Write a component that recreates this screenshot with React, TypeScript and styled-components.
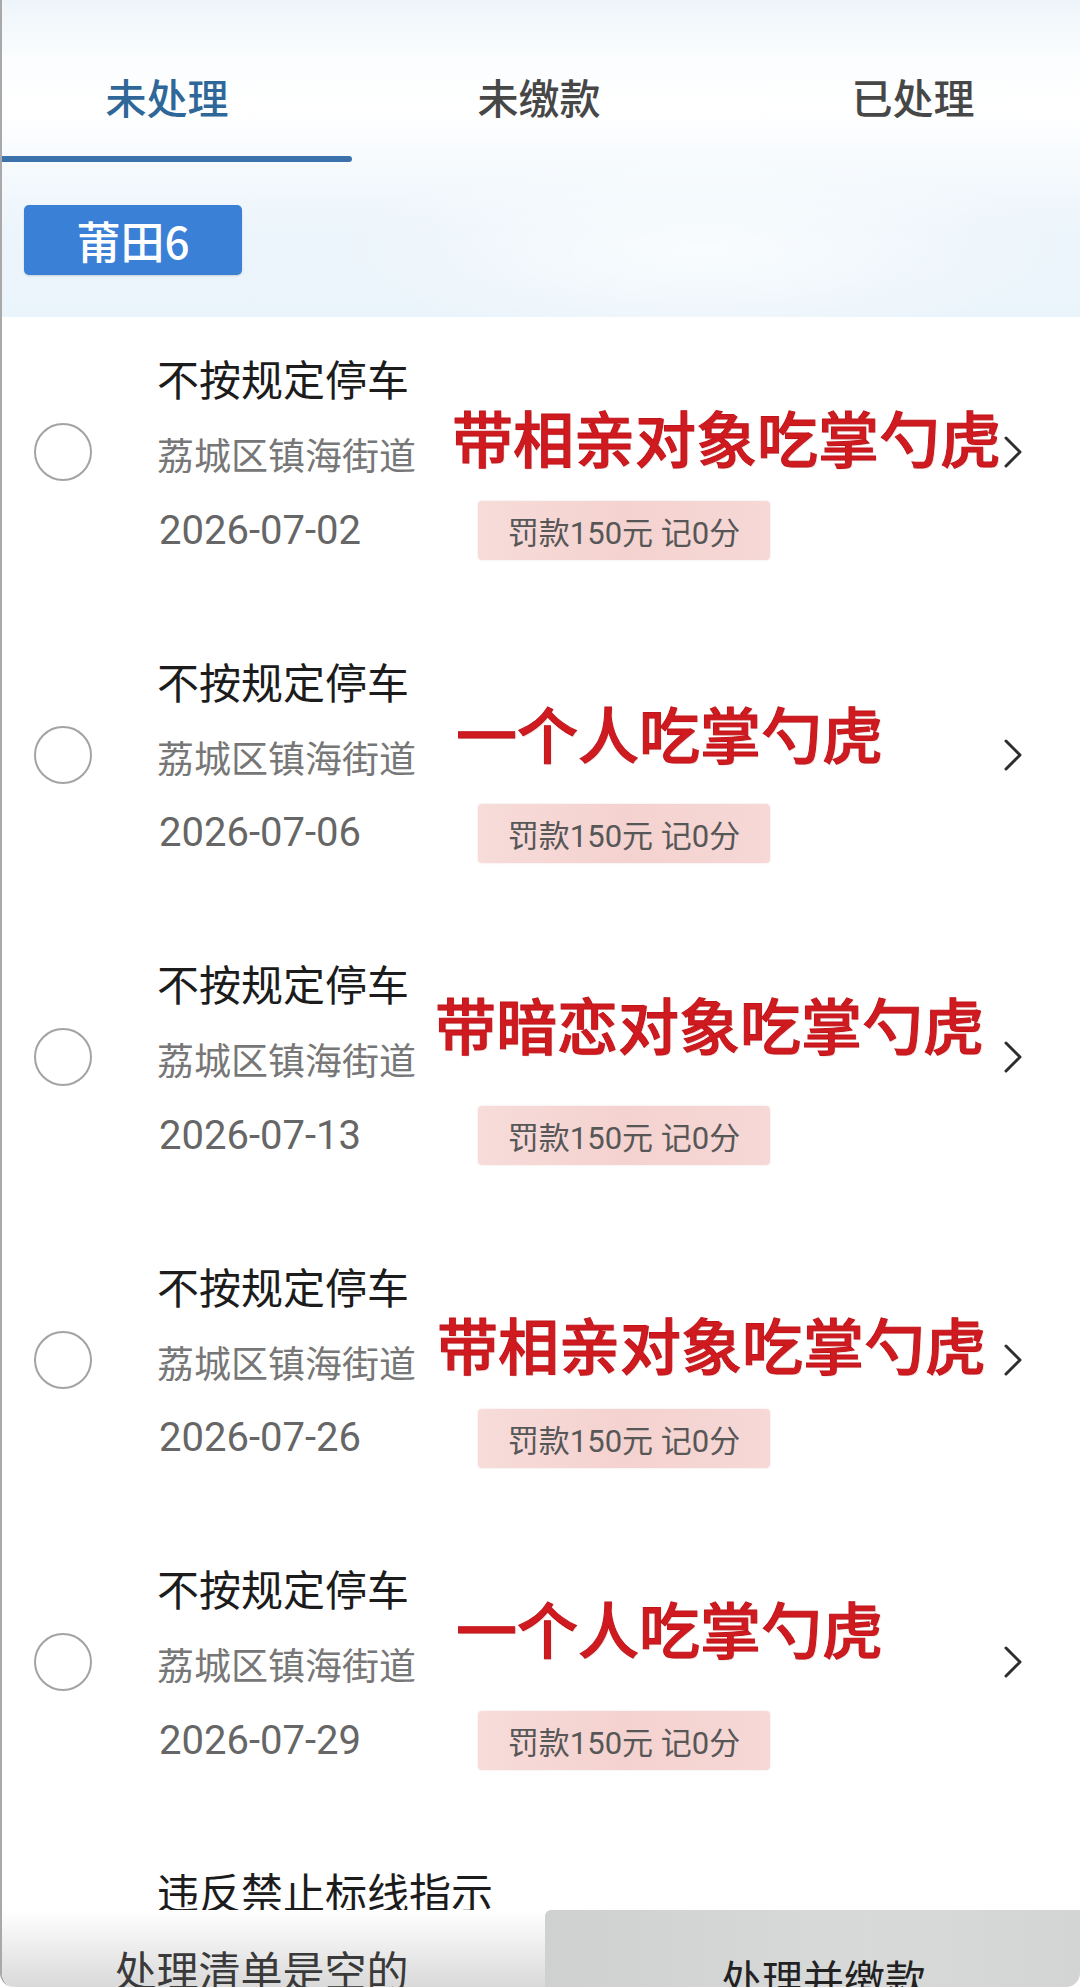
import React from "react";
import styled, { createGlobalStyle } from "styled-components";

const GlobalStyle = createGlobalStyle`
  html, body {
    margin: 0;
    padding: 0;
    background: #ffffff;
    overflow: hidden;
  }
  body {
    font-family: "Noto Sans CJK SC", "Noto Sans", sans-serif;
  }
  * { box-sizing: border-box; }
`;

const Page = styled.div`
  position: relative;
  width: 1080px;
  height: 1987px;
  overflow: hidden;
  background: #ffffff;
  border-left: 2px solid #a9a9a9;
  border-bottom-left-radius: 14px;
`;

const Header = styled.header`
  height: 317px;
  background:
    radial-gradient(ellipse 520px 140px at 700px 250px, rgba(255,255,255,0.7), rgba(255,255,255,0) 70%),
    linear-gradient(180deg, #eef5fa 0px, #fbfdfe 60px, #ffffff 110px, #f6fafd 165px, #ecf5fb 230px, #eaf4fb 317px);
`;

const TabBar = styled.nav`
  display: grid;
  grid-template-columns: 330px 414px 1fr;
  height: 156px;
  padding-top: 36px;
`;

const Tab = styled.div<{ $active?: boolean }>`
  display: flex;
  align-items: center;
  justify-content: center;
  font-size: 41px;
  font-weight: 500;
  color: ${(p) => (p.$active ? "#2f6898" : "#474747")};
`;

const Underline = styled.div`
  width: 350px;
  height: 6px;
  background: #3b72ab;
  border-radius: 0 3px 3px 0;
`;

const Badge = styled.div`
  display: inline-flex;
  align-items: center;
  justify-content: center;
  margin: 43px 0 0 22px;
  width: 218px;
  height: 70px;
  background: #3a80d6;
  border-radius: 5px;
  color: #ffffff;
  font-size: 44px;
  font-weight: 500;
  box-shadow: 0 1px 2px rgba(0, 0, 0, 0.15);
`;

const List = styled.main`
  display: flex;
  flex-direction: column;
`;

const Row = styled.section`
  position: relative;
  display: flex;
  align-items: flex-start;
  height: 302.5px;
  padding-top: 31px;
`;

const Radio = styled.span`
  flex: none;
  width: 58px;
  height: 58px;
  margin: 75px 0 0 32px;
  border: 2px solid #a3a3a3;
  border-radius: 50%;
`;

const Info = styled.div`
  flex: 1;
  margin-left: 65px;
  display: flex;
  flex-direction: column;
`;

const Title = styled.div`
  font-size: 42px;
  line-height: 60px;
  color: #1c1c1c;
`;

const Address = styled.div`
  margin-top: 20px;
  font-size: 37px;
  line-height: 52px;
  color: #777777;
`;

const DateRow = styled.div`
  display: flex;
  align-items: center;
  margin-top: 21px;
`;

const DateText = styled.div`
  width: 321px;
  font-family: Roboto, "Noto Sans CJK SC", sans-serif;
  font-size: 40px;
  line-height: 52px;
  color: #666666;
  padding-left: 2px;
`;

const Fine = styled.div`
  width: 292px;
  height: 59px;
  display: flex;
  align-items: center;
  justify-content: center;
  border-radius: 4px;
  background: linear-gradient(90deg, #f7dcda 0%, #f4d2cf 50%, #f6d8d6 100%);
  font-family: Roboto, "Noto Sans CJK SC", sans-serif;
  font-size: 31px;
  color: #575757;
  box-shadow: 0 0 2px rgba(200, 150, 150, 0.3);
`;

const Chevron = styled.svg`
  flex: none;
  margin: 88px 57px 0 0;
`;

const Caption = styled.div`
  position: absolute;
  font-size: 61px;
  line-height: 1;
  font-weight: 500;
  color: #cf1b1f;
  white-space: nowrap;
  -webkit-text-stroke: 1px #c0141a;
  text-shadow: 0 0 2px rgba(255, 255, 255, 0.9), 1px 1px 1px rgba(120, 0, 0, 0.2);
  pointer-events: none;
`;

const BottomBar = styled.footer`
  position: absolute;
  left: 0;
  right: 0;
  bottom: 0;
  height: 77px;
  display: grid;
  grid-template-columns: 543px 1fr;
`;

const BarLeft = styled.div`
  overflow: hidden;
  background: linear-gradient(180deg, #ffffff 0%, #f0f0f0 40%, #d9d9d9 100%);
  border-bottom-left-radius: 14px;
  padding: 38px 24px 0 0;
  text-align: center;
  font-size: 42px;
  line-height: 1;
  color: #3a3a3a;
`;

const BarRight = styled.div`
  overflow: hidden;
  background: linear-gradient(90deg, #cfd0d0 0%, #d8d9d9 60%, #d3d4d4 100%);
  border-top-left-radius: 6px;
  border-bottom-right-radius: 14px;
  padding: 47px 0 0 22px;
  text-align: center;
  font-size: 41px;
  line-height: 1;
  color: #222222;
`;

type Item = {
  title: string;
  date?: string;
  caption?: string;
  capLeft?: number;
  capTop?: number;
};

const items: Item[] = [
  { title: "不按规定停车", date: "2026-07-02", caption: "带相亲对象吃掌勺虎", capLeft: 450, capTop: 89 },
  { title: "不按规定停车", date: "2026-07-06", caption: "一个人吃掌勺虎", capLeft: 454, capTop: 82 },
  { title: "不按规定停车", date: "2026-07-13", caption: "带暗恋对象吃掌勺虎", capLeft: 433, capTop: 71 },
  { title: "不按规定停车", date: "2026-07-26", caption: "带相亲对象吃掌勺虎", capLeft: 435, capTop: 88 },
  { title: "不按规定停车", date: "2026-07-29", caption: "一个人吃掌勺虎", capLeft: 454, capTop: 70 },
  { title: "违反禁止标线指示" },
];

const ChevronIcon = () => (
  <Chevron width="20" height="32" viewBox="0 0 20 32">
    <polyline points="3,2 17,16 3,30" fill="none" stroke="#2e2e2e" strokeWidth="3" strokeLinecap="round" strokeLinejoin="round" />
  </Chevron>
);

export default function App() {
  return (
    <>
      <GlobalStyle />
      <Page>
        <Header>
          <TabBar>
            <Tab $active>未处理</Tab>
            <Tab>未缴款</Tab>
            <Tab>已处理</Tab>
          </TabBar>
          <Underline />
          <Badge>莆田6</Badge>
        </Header>
        <List>
          {items.map((it, i) => (
            <Row key={i}>
              <Radio />
              <Info>
                <Title>{it.title}</Title>
                {it.date && (
                  <>
                    <Address>荔城区镇海街道</Address>
                    <DateRow>
                      <DateText>{it.date}</DateText>
                      <Fine>罚款150元 记0分</Fine>
                    </DateRow>
                  </>
                )}
              </Info>
              <ChevronIcon />
              {it.caption && (
                <Caption style={{ left: it.capLeft, top: it.capTop }}>{it.caption}</Caption>
              )}
            </Row>
          ))}
        </List>
        <BottomBar>
          <BarLeft>处理清单是空的</BarLeft>
          <BarRight>处理并缴款</BarRight>
        </BottomBar>
      </Page>
    </>
  );
}
